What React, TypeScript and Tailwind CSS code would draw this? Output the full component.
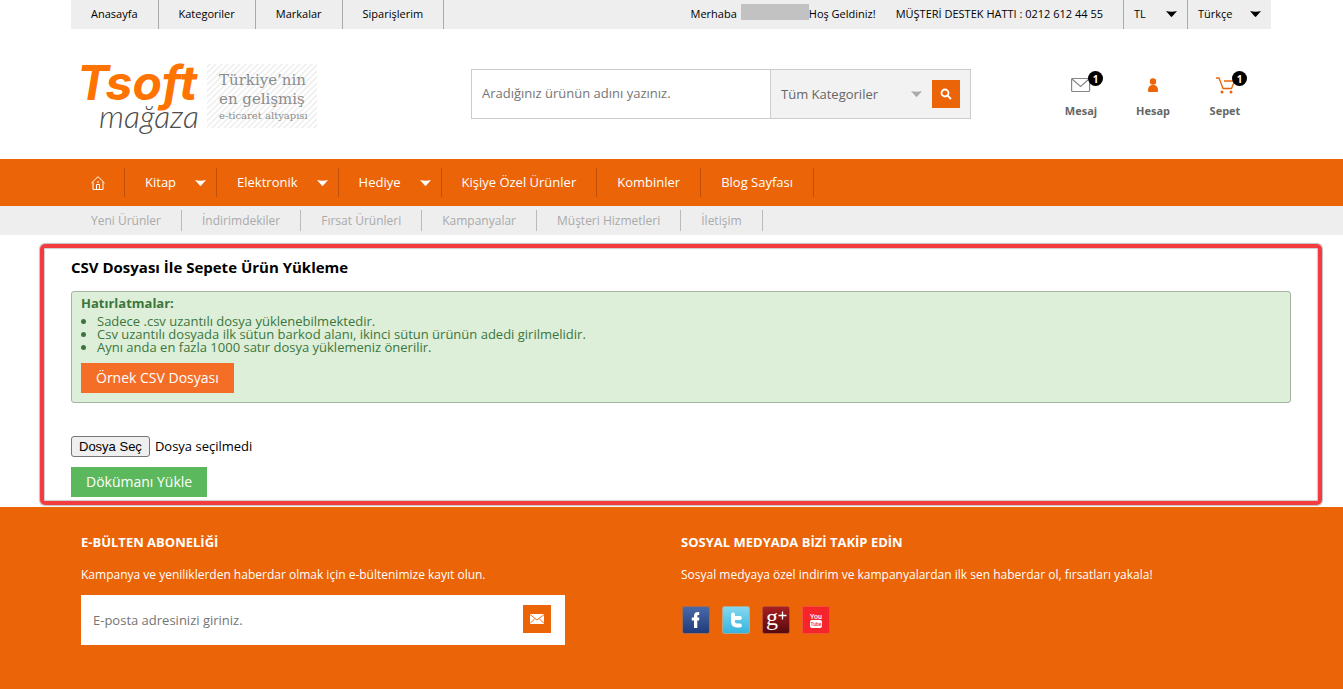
import React from 'react';

const topLinks = ['Anasayfa', 'Kategoriler', 'Markalar', 'Siparişlerim'];

const mainMenu = [
  { label: 'Kitap', hasMenu: true },
  { label: 'Elektronik', hasMenu: true },
  { label: 'Hediye', hasMenu: true },
  { label: 'Kişiye Özel Ürünler', hasMenu: false },
  { label: 'Kombinler', hasMenu: false },
  { label: 'Blog Sayfası', hasMenu: false },
];

const subMenu = ['Yeni Ürünler', 'İndirimdekiler', 'Fırsat Ürünleri', 'Kampanyalar', 'Müşteri Hizmetleri', 'İletişim'];

const reminders = [
  'Sadece .csv uzantılı dosya yüklenebilmektedir.',
  'Csv uzantılı dosyada ilk sütun barkod alanı, ikinci sütun ürünün adedi girilmelidir.',
  'Aynı anda en fazla 1000 satır dosya yüklemeniz önerilir.',
];

const Container = ({ className = '', children }: { className?: string; children: React.ReactNode }) => (
  <div className={`mx-auto w-full max-w-[1201px] pr-px ${className}`}>{children}</div>
);

const Caret = ({ className = '' }: { className?: string }) => (
  <svg className={`h-[6px] w-[11px] ${className}`} viewBox="0 0 11 6" fill="currentColor" aria-hidden="true">
    <path d="M0 0q5.500 1.400 11 0L6.200 5.600q-.7.700-1.400 0z" />
  </svg>
);

const TopSelect = ({ label, value, className }: { label: string; value: string; className: string }) => (
  <div className={`relative border-l border-[#aaa] ${className}`}>
    <select aria-label={label} className="h-full w-full appearance-none bg-transparent pl-[10px] pr-6 text-[11px] outline-none">
      <option>{value}</option>
    </select>
    <Caret className="pointer-events-none absolute right-[10px] top-[11px]" />
  </div>
);

const Logo = () => (
  <a href="#" aria-label="Tsoft Mağaza" className="block w-[236px]">
    <svg width="236" height="76" viewBox="0 0 236 76" className="overflow-visible">
      <defs>
        <pattern id="stripes" width="6" height="6" patternUnits="userSpaceOnUse">
          <path d="M-1 7L7-1M-1 1L1-1M5 7L7 5" stroke="#efefef" strokeWidth="1.800" />
        </pattern>
      </defs>
      <rect x="126" y="3" width="110" height="64" fill="url(#stripes)" />
      <text x="-4" y="39" fill="#ff7300" fontFamily="Inter, sans-serif" fontSize="48" fontWeight="700" fontStyle="italic">Tsoft</text>
      <text x="18" y="67" fill="#4d4d4d" fontFamily="Lato, sans-serif" fontSize="32" fontWeight="300" fontStyle="italic">mağaza</text>
      <g fill="#8c8c8c" fontFamily="'DejaVu Serif', serif">
        <text x="138" y="24" fontSize="15">Türkiye’nin</text>
        <text x="138" y="43" fontSize="15">en gelişmiş</text>
        <text x="138" y="58" fontSize="10">e-ticaret altyapısı</text>
      </g>
    </svg>
  </a>
);

const Badge = ({ count }: { count: number }) => (
  <span className="absolute -right-3 -top-[6px] flex h-[15px] w-[15px] items-center justify-center rounded-full bg-black text-[10px] font-bold leading-none text-white">
    {count}
  </span>
);

const UserLink = ({ label, count, children }: { label: string; count?: number; children: React.ReactNode }) => (
  <a href="#" className="flex w-[72px] flex-col items-center gap-[10px] text-[11px] font-bold text-[#666]">
    <span className="relative flex h-4 w-5 items-center justify-center">
      {children}
      {count && <Badge count={count} />}
    </span>
    <span className="leading-4">{label}</span>
  </a>
);

const TopBar = () => (
  <Container>
    <div className="flex h-[29px] justify-between bg-[#eee] text-[11px] text-black">
      <nav className="flex">
        {topLinks.map((item) => (
          <a key={item} href="#" className="flex items-center border-r border-[#aaa] px-5">{item}</a>
        ))}
      </nav>
      <div className="flex items-center">
        <span>Merhaba</span>
        <span className="mb-[5px] ml-1 h-4 w-[68px] bg-[#c2c2c2]" />
        <span className="mr-5">Hoş Geldiniz!</span>
        <span className="mr-5">MÜŞTERİ DESTEK HATTI : 0212 612 44 55</span>
        <TopSelect label="Para birimi" value="TL" className="h-full w-16" />
        <TopSelect label="Dil" value="Türkçe" className="h-full w-[84px]" />
      </div>
    </div>
  </Container>
);

const Header = () => (
  <Container className="flex h-[130px]">
    <div className="w-[400px] pl-[10px] pt-8">
      <Logo />
    </div>
    <form className="mt-10 flex h-[50px] w-[500px] border border-[#ccc]" onSubmit={(e) => e.preventDefault()}>
      <input
        type="text"
        aria-label="Ürün ara"
        placeholder="Aradığınız ürünün adını yazınız."
        className="min-w-0 flex-1 px-[10px] text-[13px] outline-none placeholder:text-[#757575]"
      />
      <div className="flex w-[200px] items-center border-l border-[#ccc] bg-[#f2f2f2] pr-[10px]">
        <div className="relative flex flex-1 items-center">
          <select aria-label="Kategori" className="w-full appearance-none bg-transparent pl-[10px] text-[13px] leading-5 text-[#666] outline-none">
            <option>Tüm Kategoriler</option>
          </select>
          <Caret className="pointer-events-none absolute right-[10px] text-[#aaa]" />
        </div>
        <button type="submit" aria-label="Ara" className="flex h-7 w-7 items-center justify-center bg-[#eb6407] text-white">
          <svg width="12" height="12" viewBox="0 0 12 12" fill="none" stroke="currentColor" strokeWidth="1.800">
            <circle cx="5" cy="5" r="3.500" />
            <path d="M7.600 7.600L11 11" />
          </svg>
        </button>
      </div>
    </form>
    <div className="flex flex-1 justify-end pr-[10px] pt-12">
      <UserLink label="Mesaj" count={1}>
        <svg width="20" height="16" viewBox="0 0 20 16" fill="none" stroke="#888" strokeWidth="1.200">
          <rect x=".6" y="1.500" width="18" height="13" rx="1" />
          <path d="M1 2l8.600 7.500L18 2" />
        </svg>
      </UserLink>
      <UserLink label="Hesap">
        <svg width="12" height="16" viewBox="0 0 12 16" fill="#eb6407">
          <circle cx="6" cy="4.500" r="3.200" />
          <path d="M1 13.500C1 9.500 3 8 6 8s5 1.500 5 5.500c0 1-.5 1.500-1.500 1.500h-7C1.500 15 1 14.500 1 13.500z" />
        </svg>
      </UserLink>
      <UserLink label="Sepet" count={1}>
        <svg width="20" height="18" viewBox="0 0 20 18" fill="none" stroke="#eb6407" strokeWidth="1.300">
          <path d="M1 2h3l4 10.500h8.500L19.500 5H9" />
          <circle cx="7" cy="16" r="1.500" fill="#eb6407" stroke="none" />
          <circle cx="16" cy="16" r="1.500" fill="#eb6407" stroke="none" />
        </svg>
      </UserLink>
    </div>
  </Container>
);

const MainNav = () => (
  <nav className="bg-[#eb6407] text-white">
    <Container className="flex h-[47px] items-center">
      <a href="#" aria-label="Anasayfa" className="flex h-[29px] items-center border-r border-[#c25004] pl-5 pr-[19px]">
        <svg width="14" height="14" viewBox="0 0 14 14" fill="none" stroke="currentColor">
          <path d="M.5 7L7 .7 13.500 7M2 6v7.500h10V6M5.500 13.500v-5h3v5M6 6h2" />
        </svg>
      </a>
      {mainMenu.map(({ label, hasMenu }) => (
        <a key={label} href="#" className={`flex h-[29px] items-center border-r border-[#c25004] pl-5 text-[13px] font-medium ${hasMenu ? 'pr-[10px]' : 'pr-5'}`}>
          {label}
          {hasMenu && <Caret className="ml-[19px]" />}
        </a>
      ))}
    </Container>
  </nav>
);

const SubNav = () => (
  <nav className="bg-[#eee] text-[#aaa]">
    <Container className="flex h-[29px] items-center">
      {subMenu.map((item) => (
        <a key={item} href="#" className="flex h-[21px] items-center border-r border-[#bbb] px-5 text-xs">{item}</a>
      ))}
    </Container>
  </nav>
);

const CsvUpload = () => (
  <Container className="pb-[2px] pt-[9px]">
    <main className="-ml-[31px] -mr-[51px] rounded-[5px] border-4 border-[#f23c3f] px-[27px] pb-1 pt-[9px] shadow-[0_0_1px_1px_#00000040,inset_0_0_1px_1px_#00000033]">
      <h1 className="text-[15px] font-bold leading-5 text-black">CSV Dosyası İle Sepete Ürün Yükleme</h1>
      <section className="mt-[14px] rounded-[3px] border border-[#a3b5a0] bg-[#ddefd8] px-[9px] pb-[9px] pt-[3px] text-[13px] text-[#3c763d]">
        <h2 className="font-bold leading-4">Hatırlatmalar:</h2>
        <ul className="mb-[9px] mt-1 list-disc pl-4 leading-[13px]">
          {reminders.map((item) => (
            <li key={item}>{item}</li>
          ))}
        </ul>
        <button type="button" className="h-[30px] bg-[#f56e27] px-[15px] text-sm text-white">Örnek CSV Dosyası</button>
      </section>
      <form className="mt-[33px]" onSubmit={(e) => e.preventDefault()}>
        <label className="flex items-center gap-[5px] text-[13px] text-black">
          <input type="file" accept=".csv" className="sr-only" />
          <span className="flex h-[21px] items-center rounded-[3px] border border-[#767676] bg-[#efefef] px-[7px] font-['Liberation_Sans',Arial,sans-serif]">
            Dosya Seç
          </span>
          <span>Dosya seçilmedi</span>
        </label>
        <button type="submit" className="mt-[10px] block h-[30px] bg-[#5cb85c] px-[15px] text-sm text-white">Dökümanı Yükle</button>
      </form>
    </main>
  </Container>
);

const SocialLinks = () => (
  <div className="mt-[23px] flex gap-3 pl-px">
    <a href="#" aria-label="Facebook">
      <svg width="28" height="28" viewBox="0 0 28 28">
        <defs>
          <linearGradient id="fb" x2="0" y2="1"><stop stopColor="#4a6aa9" /><stop offset="1" stopColor="#1f3a78" /></linearGradient>
        </defs>
        <rect x=".5" y=".5" width="27" height="27" rx="2" fill="url(#fb)" stroke="#a66a4a" />
        <path d="M12 22v-7.500H9.800v-3H12V10c0-3 1.500-4.200 5.200-3.900v2.900c-1.600-.1-1.900.2-1.900 1.300v1.200h2l-.3 3h-1.700V22z" fill="#fff" />
      </svg>
    </a>
    <a href="#" aria-label="Twitter">
      <svg width="28" height="28" viewBox="0 0 28 28">
        <defs>
          <linearGradient id="tw" x2="0" y2="1"><stop stopColor="#86d8f0" /><stop offset="1" stopColor="#35b3dd" /></linearGradient>
        </defs>
        <rect x=".5" y=".5" width="27" height="27" rx="2" fill="url(#tw)" stroke="#b5a58a" />
        <path d="M11 8.500v7c0 2.800 1.200 4 4 4h3M11 12h7" fill="none" stroke="#fff" strokeWidth="3.800" strokeLinecap="round" />
      </svg>
    </a>
    <a href="#" aria-label="Google Plus">
      <svg width="28" height="28" viewBox="0 0 28 28" className="overflow-visible">
        <defs>
          <linearGradient id="gp" x2="0" y2="1"><stop stopColor="#a81f22" /><stop offset="1" stopColor="#560a0c" /></linearGradient>
        </defs>
        <rect x=".5" y=".5" width="27" height="27" rx="2" fill="url(#gp)" stroke="#b8512a" />
        <text x="4" y="19" fill="#fff" fontFamily="'Liberation Serif', serif" fontSize="24">g</text>
        <path d="M20.500 5.500v8M16.500 9.500h8" stroke="#fff" strokeWidth="1.300" />
      </svg>
    </a>
    <a href="#" aria-label="YouTube">
      <svg width="28" height="28" viewBox="0 0 28 28">
        <rect x=".5" y=".5" width="27" height="27" rx="2" fill="#f5252b" stroke="#f2513c" />
        <rect x="8" y="14" width="12" height="8" rx="2" fill="#fff" />
        <g fontFamily="Roboto, sans-serif" fontWeight="500" textAnchor="middle">
          <text x="14" y="12.500" fill="#fff" fontSize="7">You</text>
          <text x="14" y="20.200" fill="#f5252b" fontSize="5">Tube</text>
        </g>
      </svg>
    </a>
  </div>
);

const Footer = () => (
  <footer className="flex-1 bg-[#eb6407] pb-10 pt-[26px] text-white">
    <Container className="grid grid-cols-2">
      <section className="pl-[10px]">
        <h2 className="text-[13px] font-bold leading-[18px]">E-BÜLTEN ABONELİĞİ</h2>
        <p className="mt-4 text-[12px] leading-4">Kampanya ve yeniliklerden haberdar olmak için e-bültenimize kayıt olun.</p>
        <form className="mt-3 flex h-[50px] max-w-[484px] bg-white pr-[14px]" onSubmit={(e) => e.preventDefault()}>
          <input
            type="email"
            aria-label="E-posta adresi"
            placeholder="E-posta adresinizi giriniz."
            className="h-full min-w-0 flex-1 px-3 text-[13px] text-black outline-none placeholder:text-[#757575]"
          />
          <button type="submit" aria-label="Abone ol" className="mt-[10px] flex h-7 w-7 items-center justify-center bg-[#eb6407]">
            <svg width="14" height="10" viewBox="0 0 14 10">
              <rect width="14" height="10" fill="#fff" />
              <path d="M0 .5l7 5.500 7-5.500M0 9.500l5-5M14 9.500l-5-5" fill="none" stroke="#eb6407" strokeWidth=".9" />
            </svg>
          </button>
        </form>
      </section>
      <section className="pl-[10px]">
        <h2 className="text-[13px] font-bold leading-[18px]">SOSYAL MEDYADA BİZİ TAKİP EDİN</h2>
        <p className="mt-4 text-[12px] leading-4">Sosyal medyaya özel indirim ve kampanyalardan ilk sen haberdar ol, fırsatları yakala!</p>
        <SocialLinks />
      </section>
    </Container>
  </footer>
);

export default function App() {
  return (
    <div lang="tr" className="flex min-h-screen flex-col bg-white font-['Open_Sans',sans-serif]">
      <TopBar />
      <Header />
      <MainNav />
      <SubNav />
      <CsvUpload />
      <Footer />
    </div>
  );
}
